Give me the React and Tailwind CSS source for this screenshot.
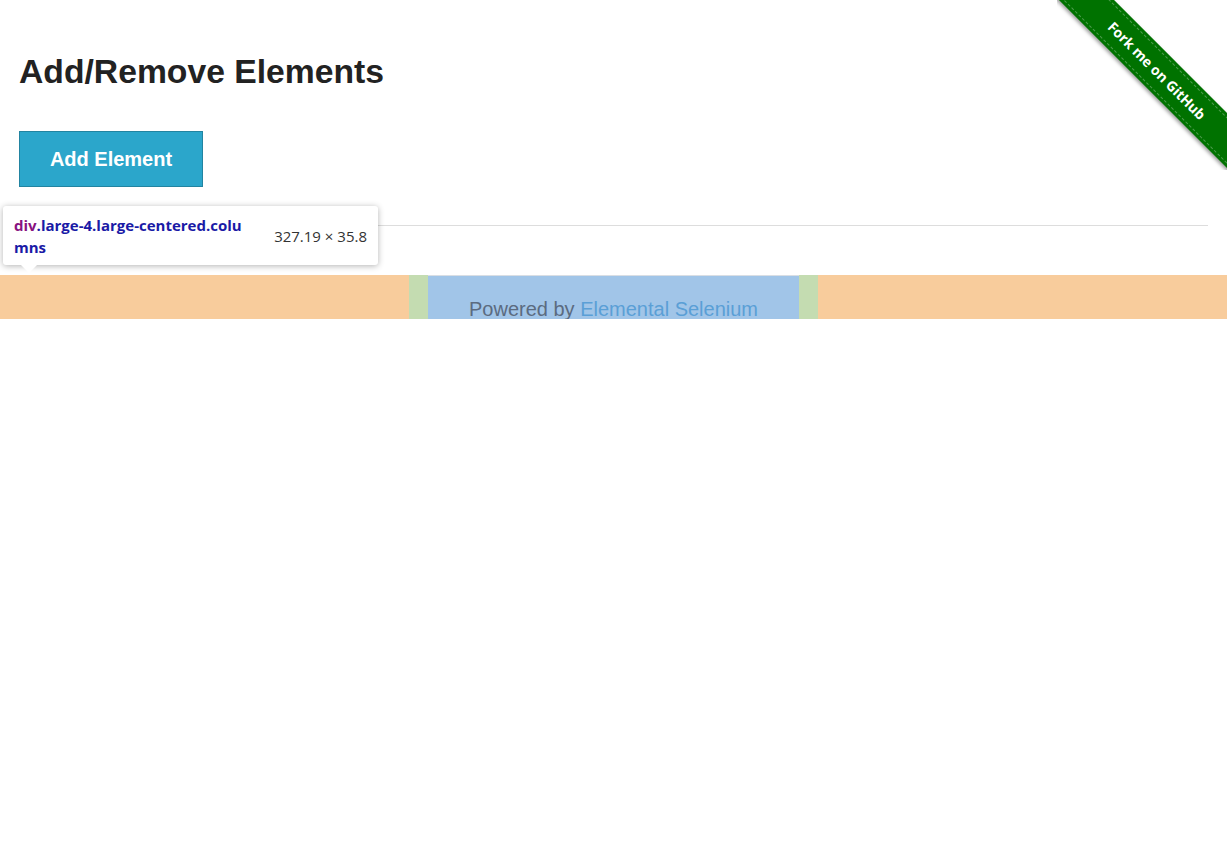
export default function App() {
  return (
    <div className="relative min-h-screen bg-white" style={{ fontFamily: '"Liberation Sans", Arial, sans-serif' }}>
      <div className="px-[19px] pt-[51px]">
        <h3 className="text-[33.7px] font-bold leading-[40px] text-[#222]">Add/Remove Elements</h3>
        <button
          type="button"
          className="mt-[40px] flex h-[56px] w-[184px] items-center justify-center border border-[#2284a1] bg-[#2ba6cb] text-[20px] font-bold text-white"
        >
          Add Element
        </button>
      </div>

      <hr className="mx-[19px] mt-[38px] border-0 border-t border-[#dddddd]" />

      <div className="mt-[49px] flex h-[44px] overflow-hidden">
        <div className="flex-1 bg-[#f8cc9c]" />
        <div className="w-[19px] bg-[#c4dcb1]" />
        <div className="w-[371px] border-t border-[#d9dee4] bg-[#a1c5e8] pt-[22px] text-center text-[20px] leading-[23px] text-[#5b6b80]">
          Powered by <span className="text-[#5a9fd6]">Elemental Selenium</span>
        </div>
        <div className="w-[19px] bg-[#c4dcb1]" />
        <div className="flex-1 bg-[#f8cc9c]" />
      </div>

      {/* devtools inspect tooltip */}
      <div className="absolute left-[3px] top-[206px] w-[375px] rounded-[3px] bg-white shadow-[0_1px_6px_rgba(0,0,0,0.3)]">
        <div className="flex items-center justify-between px-[11px] pt-[8px] pb-[7px] text-[15px]" style={{ fontFamily: '"Open Sans", "Noto Sans", sans-serif' }}>
          <div className="w-[240px] break-all font-bold leading-[22px] text-[#1a1aa6]">
            <span className="text-[#881280]">div</span>.large-4.large-centered.columns
          </div>
          <div className="text-[#333]">327.19 × 35.8</div>
        </div>
        <div className="absolute left-[18px] top-full h-0 w-0 border-x-[8px] border-t-[8px] border-x-transparent border-t-white" />
      </div>

      {/* fork ribbon */}
      <div className="absolute right-0 top-0 h-[170px] w-[170px] overflow-hidden">
        <div
          className="absolute left-[-30px] top-[51px] flex h-[39px] w-[260px] rotate-45 items-center justify-center bg-[#007200] text-[14px] font-bold text-white shadow-[0_2px_4px_rgba(0,0,0,0.4)]"
          style={{ fontFamily: '"Open Sans", "Noto Sans", sans-serif' }}
        >
          <div className="flex h-[33px] w-full items-center justify-center border-y border-dashed border-white/30">
            Fork me on GitHub
          </div>
        </div>
      </div>
    </div>
  )
}
